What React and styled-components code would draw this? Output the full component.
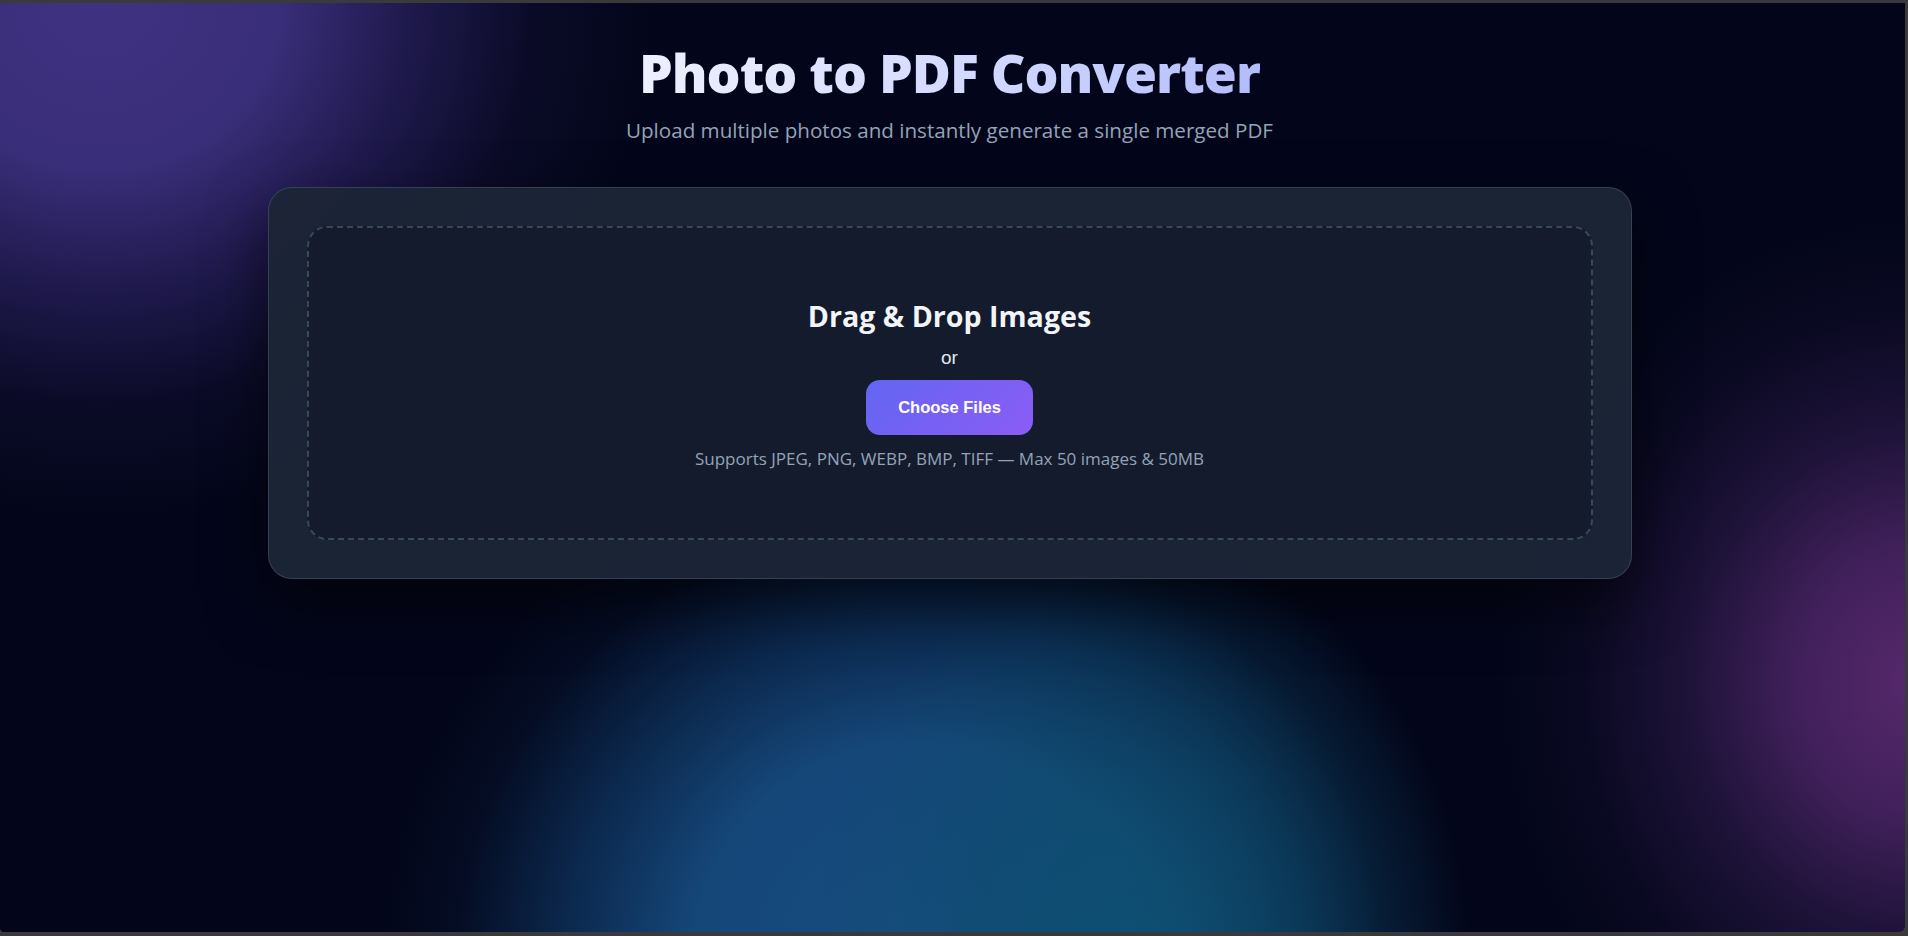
import React from 'react';
import styled, { createGlobalStyle } from 'styled-components';

const GlobalStyle = createGlobalStyle`
  html, body {
    margin: 0;
    padding: 0;
    height: 100%;
    background: #3a3a3c;
  }
  body {
    font-family: "Liberation Sans", Arial, sans-serif;
  }
  #root {
    height: 100%;
  }
`;

export default function App() {
  return (
    <>
      <GlobalStyle />
      <Frame>
        <Page>
          <Header>
            <Title>Photo to PDF Converter</Title>
            <Subtitle>Upload multiple photos and instantly generate a single merged PDF</Subtitle>
          </Header>
          <Card>
            <DropZone>
              <DropTitle>Drag &amp; Drop Images</DropTitle>
              <Or>or</Or>
              <ChooseButton>Choose Files</ChooseButton>
              <Hint>Supports JPEG, PNG, WEBP, BMP, TIFF — Max 50 images &amp; 50MB</Hint>
            </DropZone>
          </Card>
        </Page>
      </Frame>
    </>
  );
}

const Frame = styled.div`
  height: 100%;
  box-sizing: border-box;
  padding: 3px 3px 4px 0;
  display: flex;
`;

// glow blobs are painted as radial gradients on the page itself
const Page = styled.main`
  flex: 1;
  border-radius: 0 0 6px 4px;
  overflow: hidden;
  display: flex;
  flex-direction: column;
  align-items: center;
  padding: 36px 6px 0 0;
  background-color: #03061a;
  background-image:
    radial-gradient(ellipse 560px 520px at 100px 0px, rgba(63, 50, 130, 1) 0%, rgba(60, 48, 126, 0.95) 32%, rgba(46, 36, 104, 0.65) 55%, rgba(26, 20, 66, 0.3) 78%, rgba(10, 10, 40, 0) 100%),
    radial-gradient(ellipse 420px 470px at 1915px 680px, rgba(86, 40, 108, 1) 0%, rgba(76, 37, 102, 0.85) 28%, rgba(50, 28, 80, 0.55) 55%, rgba(28, 17, 54, 0.25) 80%, rgba(20, 12, 40, 0) 100%),
    radial-gradient(ellipse 330px 420px at 1140px 960px, rgba(12, 82, 112, 0.8) 0%, rgba(12, 78, 108, 0.5) 50%, rgba(8, 50, 80, 0) 100%),
    radial-gradient(ellipse 540px 500px at 920px 950px, rgba(23, 76, 128, 1) 0%, rgba(22, 74, 126, 0.95) 42%, rgba(16, 58, 104, 0.65) 66%, rgba(8, 28, 58, 0.28) 86%, rgba(5, 15, 40, 0) 100%);
`;

const Header = styled.header`
  display: flex;
  flex-direction: column;
  align-items: center;
  gap: 9px;
  margin-bottom: 43px;
`;

const Title = styled.h1`
  margin: 0;
  font-family: "Open Sans", "Noto Sans", sans-serif;
  font-weight: 800;
  font-size: 53.5px;
  line-height: 68px;
  letter-spacing: -1px;
  background: linear-gradient(90deg, #eef0ff 0%, #d3d9ff 55%, #b3bcfc 100%);
  -webkit-background-clip: text;
  background-clip: text;
  color: transparent;
`;

const Subtitle = styled.p`
  margin: 0;
  font-family: "Open Sans", "Noto Sans", sans-serif;
  font-size: 20.6px;
  line-height: 28px;
  color: #94a3b8;
`;

const Card = styled.section`
  width: 1364px;
  box-sizing: border-box;
  padding: 38px;
  border-radius: 24px;
  border: 1px solid rgba(148, 163, 184, 0.22);
  background: linear-gradient(135deg, rgba(28, 37, 54, 0.97), rgba(27, 37, 55, 0.97));
  box-shadow: 0 24px 60px rgba(0, 0, 0, 0.55);
`;

const DropZone = styled.div`
  box-sizing: border-box;
  height: 314px;
  border: 2px dashed #3a475b;
  border-radius: 20px;
  background: #141b2d;
  display: flex;
  flex-direction: column;
  align-items: center;
  padding-top: 71px;
`;

const DropTitle = styled.h3`
  margin: 0;
  font-family: "Open Sans", "Noto Sans", sans-serif;
  font-weight: 700;
  font-size: 28.6px;
  line-height: 34px;
  color: #f1f5f9;
`;

const Or = styled.p`
  margin: 14px 0 0;
  font-size: 19px;
  line-height: 22px;
  color: #e2e8f0;
`;

const ChooseButton = styled.button`
  margin-top: 11px;
  width: 167px;
  height: 55px;
  border: none;
  border-radius: 14px;
  background: linear-gradient(135deg, #6366f1, #8b5cf6);
  color: #ffffff;
  font-family: "Liberation Sans", Arial, sans-serif;
  font-weight: 700;
  font-size: 16.5px;
  cursor: pointer;
`;

const Hint = styled.p`
  margin: 12px 0 0;
  font-family: "Open Sans", "Noto Sans", sans-serif;
  font-size: 17px;
  line-height: 24px;
  color: #94a3b8;
`;
